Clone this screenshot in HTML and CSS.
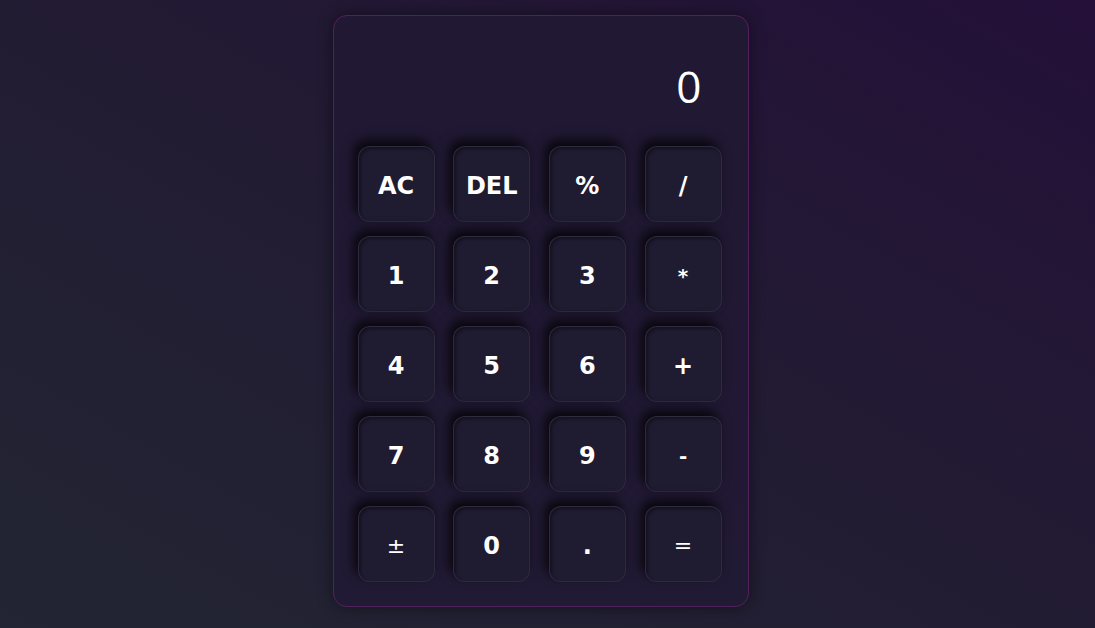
FILE: index.html
```html
<!DOCTYPE html>
<html lang="en">
<head>
<meta charset="utf-8">
<title>Calculator</title>
<link rel="stylesheet" href="styles.css">
</head>
<body>
<div class="calculator">
  <div class="display">0</div>
  <div class="keys">
    <button class="key">AC</button>
    <button class="key">DEL</button>
    <button class="key">%</button>
    <button class="key">/</button>
    <button class="key">1</button>
    <button class="key">2</button>
    <button class="key">3</button>
    <button class="key small">*</button>
    <button class="key">4</button>
    <button class="key">5</button>
    <button class="key">6</button>
    <button class="key">+</button>
    <button class="key">7</button>
    <button class="key">8</button>
    <button class="key">9</button>
    <button class="key small">-</button>
    <button class="key thin">±</button>
    <button class="key">0</button>
    <button class="key">.</button>
    <button class="key thin">=</button>
  </div>
</div>
</body>
</html>
```

FILE: styles.css
```css
html, body {
  margin: 0;
  height: 100%;
}
body {
  background: linear-gradient(to top right, #222533 0%, #221c33 50%, #241039 100%);
  display: flex;
  justify-content: center;
  align-items: flex-start;
  font-family: "DejaVu Sans", "Liberation Sans", sans-serif;
}
.calculator {
  margin-top: 15px;
  margin-right: 14px;
  width: 366px;
  height: 542px;
  padding: 24px;
  border: 1px solid #52205c;
  border-radius: 14px;
  background: rgba(33, 26, 52, 0.9);
  box-shadow: 0 0 16px rgba(0, 0, 0, 0.45);
  display: flex;
  flex-direction: column;
  gap: 14px;
}
.display {
  height: 93px;
  display: flex;
  align-items: center;
  justify-content: flex-end;
  padding-right: 22px;
  color: #ffffff;
  font-family: "Open Sans", "Noto Sans", sans-serif;
  font-size: 44px;
  font-weight: 400;
}
.keys {
  display: grid;
  grid-template-columns: repeat(4, 77px);
  grid-auto-rows: 76px;
  column-gap: 18.7px;
  row-gap: 14px;
}
.key {
  border: 1px solid rgba(255, 255, 255, 0.07);
  border-radius: 12px;
  background: #1f1b31;
  color: #ffffff;
  font-family: "DejaVu Sans", sans-serif;
  font-weight: bold;
  font-size: 24px;
  box-shadow: -4px -6px 12px rgba(0, 0, 0, 0.8), inset 2px 2px 3px rgba(0, 0, 0, 0.35);
  padding: 3px 0 0;
  cursor: pointer;
}
.key.small {
  font-size: 20px;
}
.key.thin {
  font-weight: normal;
  font-size: 22px;
}
```
